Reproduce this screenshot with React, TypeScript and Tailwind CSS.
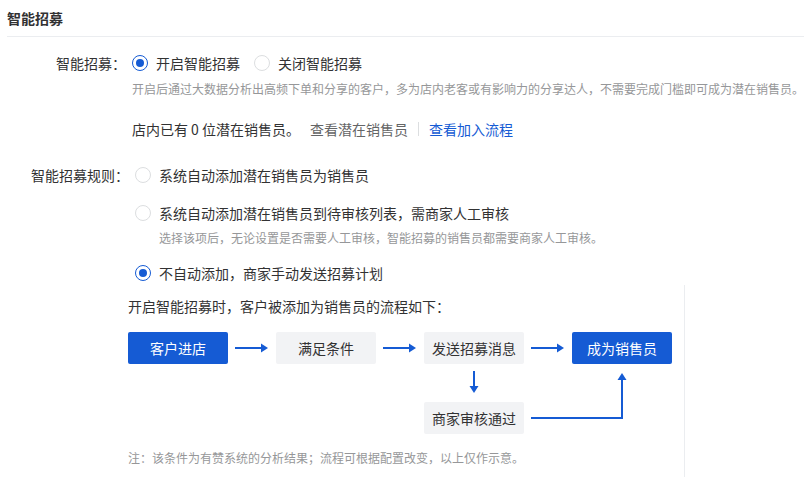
import React from "react";

const BLUE = "#155bd4";

function Radio({ checked, label }: { checked?: boolean; label: string }) {
  return (
    <label className="flex items-center gap-2 cursor-pointer">
      <span
        className={`w-4 h-4 rounded-full border flex items-center justify-center bg-white ${
          checked ? "border-[#155bd4]" : "border-[#dcdee0]"
        }`}
      >
        {checked && <span className="w-2 h-2 rounded-full bg-[#155bd4]" />}
      </span>
      <span className="text-[14px] leading-5 text-[#323233]">{label}</span>
    </label>
  );
}

function Box({ text, primary }: { text: string; primary?: boolean }) {
  return (
    <div
      className={`h-8 w-[100px] rounded-[2px] flex items-center justify-center text-[14px] ${
        primary ? "bg-[#155bd4] text-white" : "bg-[#f2f3f5] text-[#323233]"
      }`}
    >
      {text}
    </div>
  );
}

function RightArrow() {
  return (
    <svg width="48" height="32" viewBox="0 0 48 32">
      <line x1="7" y1="16" x2="34" y2="16" stroke={BLUE} strokeWidth="2" />
      <polygon points="33,11.5 40,16 33,20.5" fill={BLUE} />
    </svg>
  );
}

export default function App() {
  return (
    <div
      className="w-[804px] h-[477px] overflow-hidden bg-white text-[#323233]"
      style={{ fontFamily: "'Noto Sans CJK SC', 'Noto Sans', sans-serif" }}
    >
      {/* ── Title ───────────────────────────── */}
      <div className="ml-[7px] h-[37px] pt-[5px] border-b border-[#ebedf0]">
        <span className="text-[14px] leading-5 font-bold">智能招募</span>
      </div>

      {/* ── Switch row ──────────────────────── */}
      <div className="flex mt-4">
        <div className="w-[129px] text-right text-[14px] leading-5 text-[#323233]">智能招募：</div>
        <div className="ml-[6px] flex-1">
          <div className="flex items-center gap-[14px]">
            <Radio checked label="开启智能招募" />
            <Radio label="关闭智能招募" />
          </div>
          <div className="mt-[7px] text-[12px] leading-[18px] text-[#969799] whitespace-nowrap">
            开启后通过大数据分析出高频下单和分享的客户，多为店内老客或有影响力的分享达人，不需要完成门槛即可成为潜在销售员。
          </div>
          <div className="mt-[21px] flex items-center text-[14px] leading-5">
            <span>店内已有 0 位潜在销售员。</span>
            <span className="ml-[10px] text-[#646566]">查看潜在销售员</span>
            <span className="mx-[10px] h-[14px] w-px bg-[#dcdee0]" />
            <span className="text-[#155bd4]">查看加入流程</span>
          </div>
        </div>
      </div>

      {/* ── Rule row ────────────────────────── */}
      <div className="flex mt-[26px]">
        <div className="w-[129px] text-right text-[14px] leading-5">智能招募规则：</div>
        <div className="ml-[6px] flex-1">
          <Radio label="系统自动添加潜在销售员为销售员" />
          <div className="mt-[18px]">
            <Radio label="系统自动添加潜在销售员到待审核列表，需商家人工审核" />
          </div>
          <div className="mt-[6px] ml-6 text-[12px] leading-[18px] text-[#969799]">
            选择该项后，无论设置是否需要人工审核，智能招募的销售员都需要商家人工审核。
          </div>
          <div className="mt-4">
            <Radio checked label="不自动添加，商家手动发送招募计划" />
          </div>
        </div>
      </div>

      {/* ── Flow panel ──────────────────────── */}
      <div className="ml-[120px] mt-[2px] w-[565px] h-[200px] border-r border-[#ebedf0] pl-2 pt-[11px]">
        <div className="text-[14px] leading-5">开启智能招募时，客户被添加为销售员的流程如下：</div>
        <div className="mt-4 grid grid-cols-[100px_48px_100px_48px_100px_48px_100px] grid-rows-[32px_38px_32px]">
          <Box primary text="客户进店" />
          <RightArrow />
          <Box text="满足条件" />
          <RightArrow />
          <Box text="发送招募消息" />
          <RightArrow />
          <Box primary text="成为销售员" />

          <div className="col-start-5 row-start-2">
            <svg width="100" height="38" viewBox="0 0 100 38">
              <line x1="50" y1="7" x2="50" y2="23" stroke={BLUE} strokeWidth="2" />
              <polygon points="45.5,22 50,29 54.5,22" fill={BLUE} />
            </svg>
          </div>
          <div className="col-start-6 col-span-2 row-start-2 row-span-2">
            <svg width="148" height="70" viewBox="0 0 148 70">
              <polyline points="7,54 98,54 98,15" fill="none" stroke={BLUE} strokeWidth="2" />
              <polygon points="93.5,16 98,9 102.5,16" fill={BLUE} />
            </svg>
          </div>
          <div className="col-start-5 row-start-3">
            <Box text="商家审核通过" />
          </div>
        </div>
        <div className="mt-[15px] text-[12px] leading-[18px] text-[#969799]">
          注：该条件为有赞系统的分析结果；流程可根据配置改变，以上仅作示意。
        </div>
      </div>
    </div>
  );
}
